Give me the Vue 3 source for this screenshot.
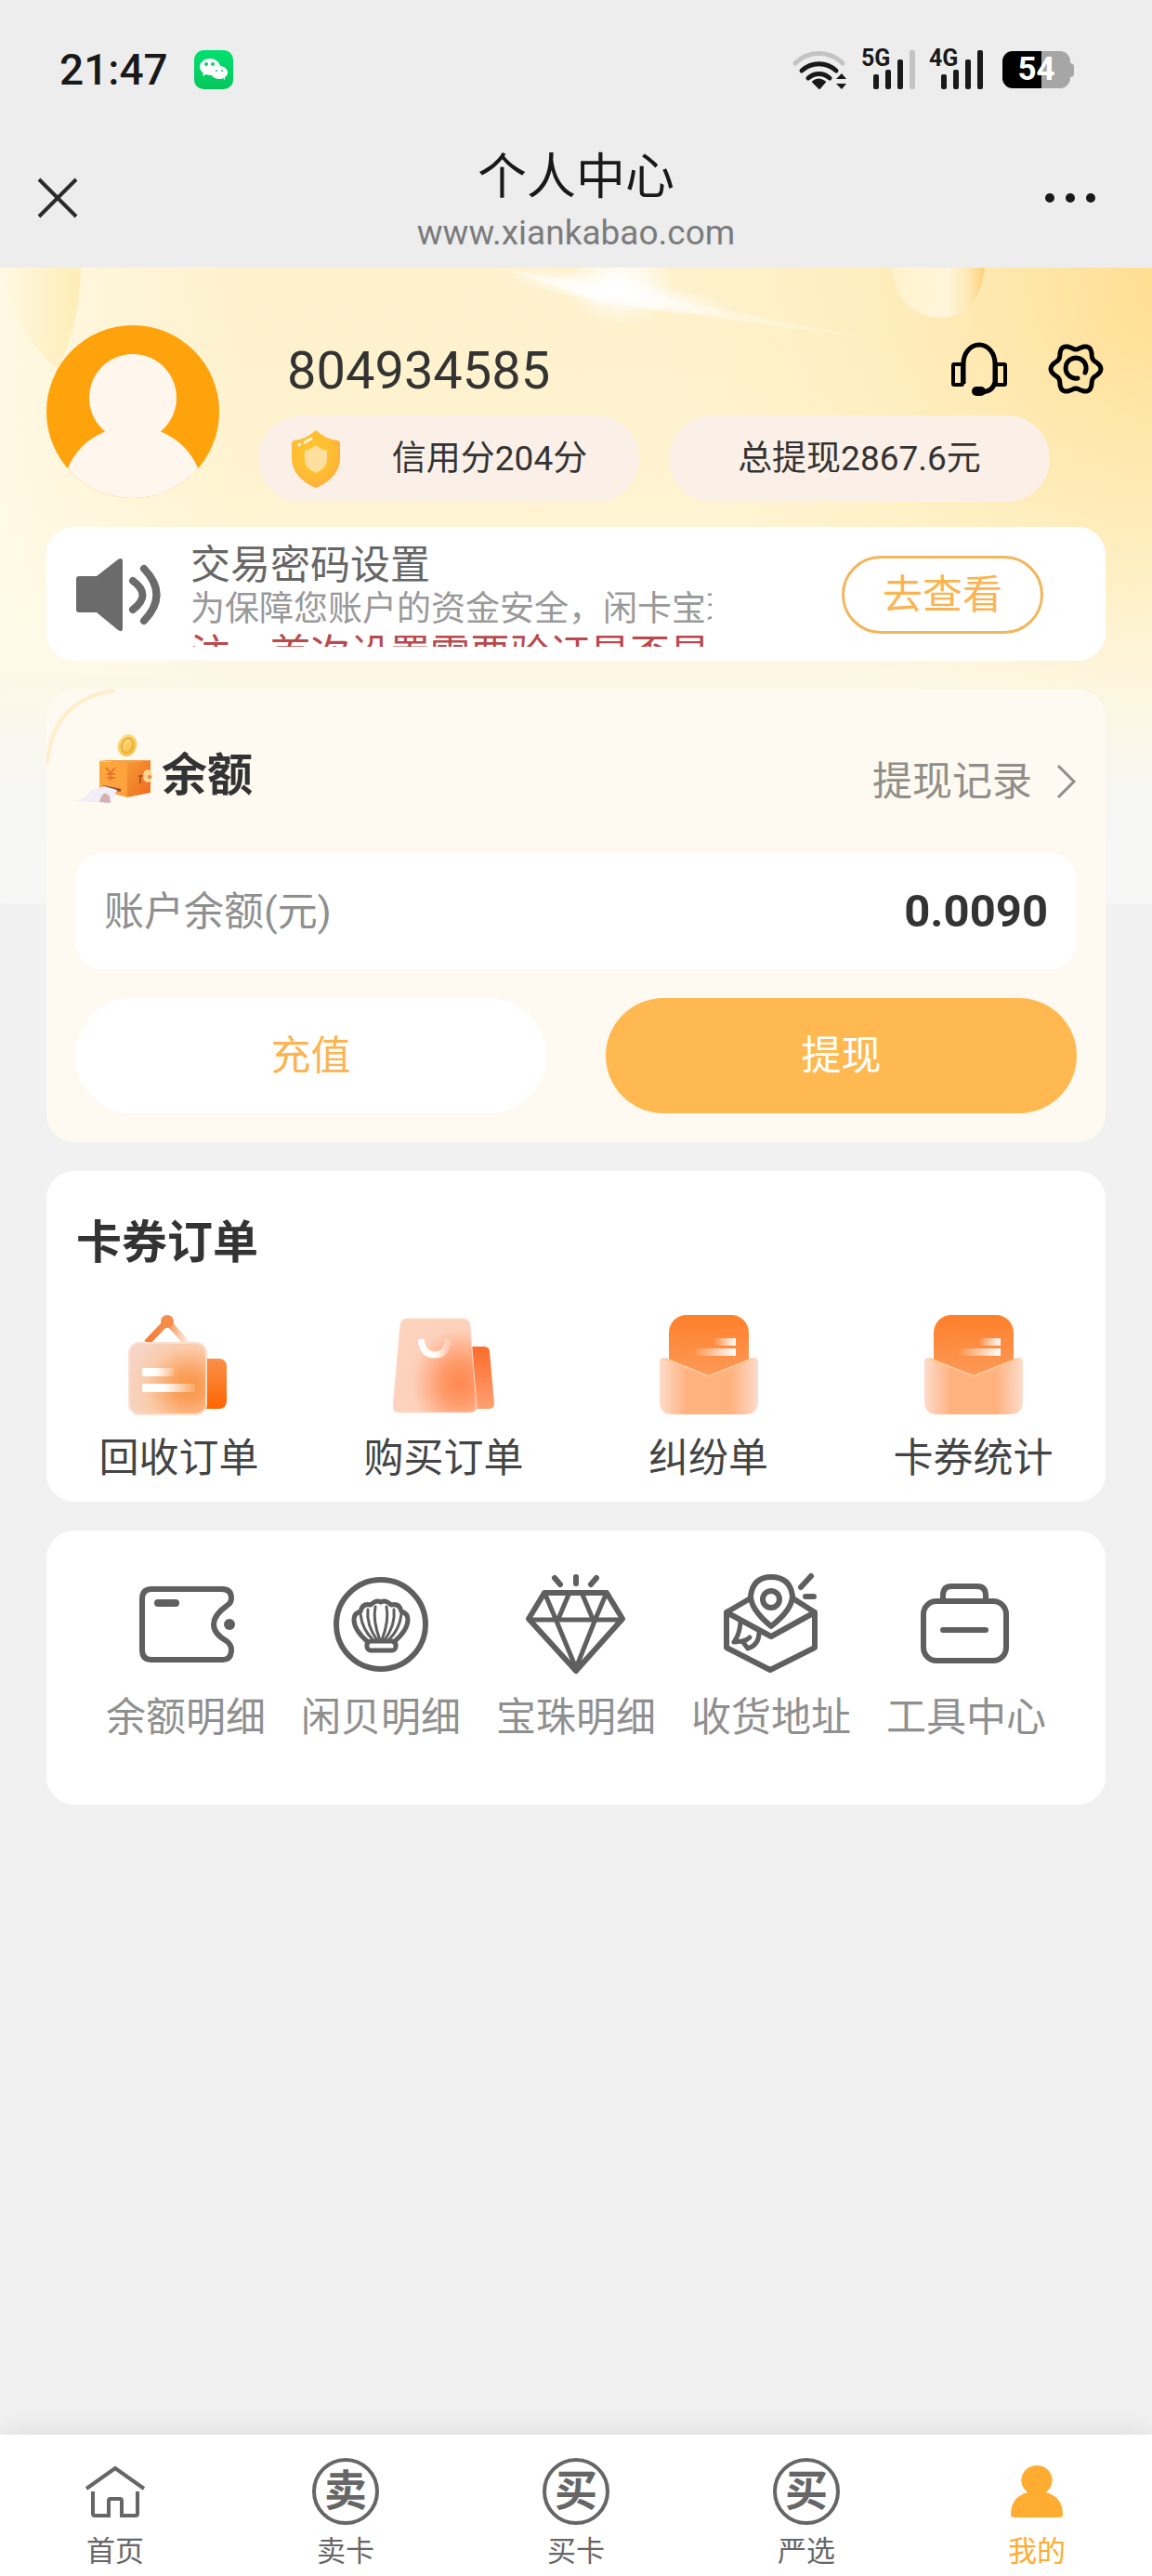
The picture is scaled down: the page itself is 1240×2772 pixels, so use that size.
<script setup>
import { ref } from 'vue'

const orders = [
  { id: 'recycle', label: '回收订单' },
  { id: 'bag', label: '购买订单' },
  { id: 'mail', label: '纠纷单' },
  { id: 'mail', label: '卡券统计' },
]

const tools = [
  { id: 'wallet', label: '余额明细' },
  { id: 'shell', label: '闲贝明细' },
  { id: 'diamond', label: '宝珠明细' },
  { id: 'address', label: '收货地址' },
  { id: 'toolbox', label: '工具中心' },
]

const tabs = [
  { label: '首页', icon: 'home' },
  { label: '卖卡', glyph: '卖' },
  { label: '买卡', glyph: '买' },
  { label: '严选', glyph: '买' },
  { label: '我的', icon: 'user' },
]
const activeTab = ref(4)

// Six-lobed outline of the settings gear
const gear = Array.from({ length: 72 }, (_, i) => {
  const a = (i * Math.PI) / 36
  const r = 24 + 3 * Math.cos(6 * a)
  return `${(30 + r * Math.cos(a)).toFixed(1)},${(30 + r * Math.sin(a)).toFixed(1)}`
}).join(' ')
</script>

<template>
  <div class="page">
    <header class="top">
      <div class="status">
        <time class="clock">21:47</time>
        <svg class="wechat" viewBox="0 0 42 42" aria-hidden="true">
          <defs>
            <linearGradient id="wx" x1="0" y1="0" x2="0" y2="1">
              <stop offset="0" stop-color="#00e070" /><stop offset="1" stop-color="#07c75c" />
            </linearGradient>
          </defs>
          <rect width="42" height="42" rx="10" fill="url(#wx)" />
          <path d="M17 9c-6 0-11 4-11 9 0 3 2 5 4 7l-1 3 4-2c2 1 5 1 7 1a9 8 0 0 1 8-10c-1-5-6-8-11-8z" fill="#fff" />
          <path d="M27 17c-5 0-9 3-9 7s4 7 9 7c1 0 3 0 4-1l2 2v-3c2-1 3-3 3-5 0-4-4-7-9-7z" fill="#fff" />
          <g fill="#0bd066"><circle cx="13" cy="15" r="2" /><circle cx="20" cy="15" r="2" /><circle cx="24" cy="22" r="1" /><circle cx="30" cy="22" r="1" /></g>
        </svg>
        <div class="signals">
          <svg width="62" height="46" viewBox="0 0 62 46" fill="none" stroke-width="5" stroke-linecap="round" aria-label="WiFi">
            <path d="M5 16a36 36 0 0 1 51 0" stroke="#c4c4c4" />
            <path d="M12 24a27 27 0 0 1 37 0M19 32a17 17 0 0 1 23 0" stroke="#191919" />
            <path d="M24 36q6-5 13 0l-6 7z" fill="#191919" stroke="#191919" stroke-width="2" stroke-linejoin="round" />
            <path d="M49 33h11l-5-6zM49 38h11l-5 6z" fill="#191919" />
          </svg>
          <div class="cell">
            <span class="net">5G</span>
            <svg viewBox="0 0 46 42" aria-hidden="true"><g fill="#191919"><rect y="26" width="6" height="16" rx="2" /><rect x="13" y="21" width="6" height="21" rx="2" /><rect x="26" y="10" width="6" height="32" rx="2" /></g><rect x="39" width="6" height="42" rx="2" fill="#c4c4c4" /></svg>
          </div>
          <div class="cell">
            <span class="net">4G</span>
            <svg viewBox="0 0 46 42" aria-hidden="true"><g fill="#191919"><rect y="26" width="6" height="16" rx="2" /><rect x="13" y="21" width="6" height="21" rx="2" /><rect x="26" y="10" width="6" height="32" rx="2" /><rect x="39" width="6" height="42" rx="2" /></g></svg>
          </div>
          <div class="battery">54</div>
        </div>
      </div>
      <div class="nav">
        <button class="close" type="button" aria-label="关闭">
          <svg width="44" height="44" viewBox="0 0 44 44"><path d="M2 2l40 40M42 2L2 42" stroke="#2b2b2b" stroke-width="4" /></svg>
        </button>
        <div class="titles">
          <h1>个人中心</h1>
          <p>www.xiankabao.com</p>
        </div>
        <button class="more" type="button" aria-label="更多">
          <svg width="56" height="12" viewBox="0 0 56 12" fill="#191919"><circle cx="6" cy="6" r="5" /><circle cx="28" cy="6" r="5" /><circle cx="50" cy="6" r="5" /></svg>
        </button>
      </div>
    </header>

    <main class="content">
      <svg class="backdrop" viewBox="0 0 1240 684" preserveAspectRatio="none" aria-hidden="true">
        <defs>
          <linearGradient id="base" x1="0" y1="0" x2="0" y2="1">
            <stop offset="0" stop-color="#fef1cc" /><stop offset=".35" stop-color="#fff3d0" />
            <stop offset=".52" stop-color="#fff6dc" /><stop offset=".68" stop-color="#fcf9ea" />
            <stop offset=".82" stop-color="#f6f6f3" /><stop offset="1" stop-color="#f7f7f7" />
          </linearGradient>
          <radialGradient id="warm" gradientUnits="userSpaceOnUse" cx="1260" cy="20" r="560">
            <stop offset="0" stop-color="#ffdb88" stop-opacity=".9" /><stop offset=".45" stop-color="#ffe29a" stop-opacity=".45" />
            <stop offset="1" stop-color="#fff0c0" stop-opacity="0" />
          </radialGradient>
          <linearGradient id="pale" x1="0" y1="0" x2="1" y2="0">
            <stop offset="0" stop-color="#fffbe9" stop-opacity=".8" /><stop offset="1" stop-color="#fffbe9" stop-opacity="0" />
          </linearGradient>
          <linearGradient id="leaf" x1="0" y1="0" x2="1" y2="0">
            <stop offset="0" stop-color="#ffeaa8" stop-opacity="0" /><stop offset="1" stop-color="#ffe9a8" stop-opacity=".7" />
          </linearGradient>
          <radialGradient id="glow"><stop offset="0" stop-color="#fff" /><stop offset=".4" stop-color="#fff" stop-opacity=".7" /><stop offset="1" stop-color="#fff" stop-opacity="0" /></radialGradient>
          <radialGradient id="streak" gradientUnits="userSpaceOnUse" cx="670" cy="24" r="290"><stop offset="0" stop-color="#fff" stop-opacity=".6" /><stop offset="1" stop-color="#fff" stop-opacity="0" /></radialGradient>
          <linearGradient id="ball" x1="0" y1="0" x2="1" y2="0">
            <stop offset="0" stop-color="#fff3cd" /><stop offset=".6" stop-color="#fff5da" /><stop offset=".82" stop-color="#ffe9b5" /><stop offset="1" stop-color="#ffcf7a" />
          </linearGradient>
        </defs>
        <rect width="1240" height="684" fill="url(#base)" />
        <rect width="1240" height="684" fill="url(#warm)" />
        <rect width="260" height="440" fill="url(#pale)" />
        <path d="M0 0H87Q86 60 62 110Q40 90 20 60Z" fill="url(#leaf)" />
        <path d="M540 0L960 80L640 36Z" fill="url(#streak)" />
        <ellipse cx="665" cy="26" rx="130" ry="16" fill="url(#glow)" transform="rotate(9 665 26)" />
        <ellipse cx="668" cy="18" rx="60" ry="44" fill="url(#glow)" />
        <path d="M960 0H1060Q1054 54 1010 54Q966 50 960 0Z" fill="url(#ball)" />
      </svg>

      <section class="profile">
        <svg class="avatar" viewBox="0 0 186 186" role="img" aria-label="头像">
          <defs><clipPath id="disc"><circle cx="93" cy="93" r="93" /></clipPath></defs>
          <g clip-path="url(#disc)">
            <rect width="186" height="186" fill="#ffa30d" />
            <circle cx="93" cy="78" r="47" fill="#fff6ee" />
            <path d="M64 114Q93 104 122 114Q152 126 164 156V186H22V156Q34 126 64 114Z" fill="#fff6ee" />
          </g>
        </svg>
        <div class="info">
          <div class="name-row">
            <h2>804934585</h2>
            <button type="button" aria-label="客服">
              <svg width="62" height="60" viewBox="0 0 62 60" fill="none" stroke="#000">
                <path d="M14 46V24a17 20 0 0 1 34 0v20q-2 10-14 11" stroke-width="5" />
                <rect x="3" y="25" width="10" height="22" rx="1" stroke-width="4" />
                <rect x="49" y="25" width="10" height="22" rx="1" stroke-width="4" />
                <rect x="23" y="49" width="15" height="10" rx="5" fill="#000" stroke="none" />
              </svg>
            </button>
            <button type="button" aria-label="设置">
              <svg width="60" height="60" viewBox="0 0 60 60" fill="none" stroke="#000" stroke-width="5" stroke-linecap="round" stroke-linejoin="round">
                <polygon :points="gear" />
                <path d="M40 34A11 11 0 1 0 32 40" />
              </svg>
            </button>
          </div>
          <div class="pills">
            <div class="pill">
              <svg width="52" height="62" viewBox="0 0 52 62" aria-hidden="true">
                <defs>
                  <radialGradient id="sh" cx=".45" cy=".4" r=".7"><stop offset="0" stop-color="#ffc829" /><stop offset=".6" stop-color="#ffbc35" /><stop offset="1" stop-color="#fca738" /></radialGradient>
                </defs>
                <path d="M26 0Q37 10 50 11Q52 12 52 15V32Q50 52 26 62Q2 52 0 32V15Q0 12 2 11Q15 10 26 0Z" fill="url(#sh)" />
                <path d="M26 16Q32 21 38 22V33Q37 41 26 46Q15 41 14 33V22Q20 21 26 16Z" fill="#ffdf9d" />
                <path d="M14 13L21 9M8 16L9 15" stroke="#fff6df" stroke-width="3" stroke-linecap="round" />
              </svg>
              <span>信用分204分</span>
            </div>
            <div class="pill"><span>总提现2867.6元</span></div>
          </div>
        </div>
      </section>

      <section class="notice">
        <svg width="94" height="82" viewBox="0 0 94 82" fill="none" stroke="#6b6b6b" stroke-width="8" stroke-linecap="round" aria-hidden="true">
          <path d="M5 21H24L47 3Q52 0 52 5V77Q52 82 47 79L24 60H5Q2 60 2 57V24Q2 21 5 21Z" fill="#6b6b6b" stroke="none" />
          <path d="M63 26Q84 41 63 57M75 13Q102 41 75 69" />
        </svg>
        <div class="notice-text">
          <p>交易密码设置</p>
          <p class="small">为保障您账户的资金安全，闲卡宝现</p>
          <p class="warn">注，首次设置需要验证是否是</p>
        </div>
        <button class="outline" type="button">去查看</button>
      </section>

      <section class="balance">
        <svg class="arc" viewBox="0 0 80 80" aria-hidden="true"><path d="M1 79Q6 12 72 1" fill="none" stroke="#ffedcb" stroke-width="4" stroke-linecap="round" /></svg>
        <div class="balance-head">
          <svg width="86" height="76" viewBox="0 0 86 76" aria-hidden="true">
            <defs>
              <linearGradient id="front" x1="0" y1="0" x2="1" y2="1"><stop offset="0" stop-color="#fca93c" /><stop offset="1" stop-color="#ff9f3f" /></linearGradient>
              <linearGradient id="side" x1="0" y1="0" x2="1" y2="1"><stop offset="0" stop-color="#f79a35" /><stop offset="1" stop-color="#ee6a20" /></linearGradient>
              <linearGradient id="coin" x1="0" y1="0" x2="1" y2="1"><stop offset="0" stop-color="#ffe48c" /><stop offset="1" stop-color="#f8b83a" /></linearGradient>
            </defs>
            <ellipse cx="56" cy="12" rx="10" ry="12" fill="url(#coin)" transform="rotate(20 56 12)" />
            <ellipse cx="56" cy="12" rx="6" ry="8" fill="none" stroke="#eaae3d" stroke-width="2" transform="rotate(20 56 12)" />
            <path d="M26 28H81L55 32Z" fill="#f5a041" />
            <path d="M26 29L56 31V68L26 60Z" fill="url(#front)" />
            <path d="M56 31L81 28V63L56 68Z" fill="url(#side)" />
            <path d="M33 36l5 6 5-6M38 42v8M34 43h9M34 47h9" fill="none" stroke="#e9772b" stroke-width="2" />
            <path d="M68 45h10M70 45v8" stroke="#b5561c" stroke-width="2" />
            <ellipse cx="78" cy="45" rx="5" ry="7" fill="#ffd493" /><circle cx="80" cy="46" r="2" fill="#d98d42" />
            <path d="M30 55L49 59V62L30 58Z" fill="#8d4a2d" />
            <path d="M18 60L31 56L45 60L38 74L1 72Q10 70 18 60Z" fill="#f1eef7" />
            <path d="M26 73Q30 58 37 67L38 74Z" fill="#d4b0b3" />
          </svg>
          <h3>余额</h3>
          <a class="records" href="#records">提现记录
            <svg width="22" height="38" viewBox="0 0 22 38"><path d="M2 2L19 19L2 36" fill="none" stroke="#8f8d88" stroke-width="3" /></svg>
          </a>
        </div>
        <div class="amount">
          <span>账户余额(元)</span>
          <strong>0.0090</strong>
        </div>
        <div class="actions">
          <button class="recharge" type="button">充值</button>
          <button class="withdraw" type="button">提现</button>
        </div>
      </section>

      <section class="card orders">
        <h3>卡券订单</h3>
        <nav class="row">
          <a v-for="(o, i) in orders" :key="o.label" href="#orders">
            <svg v-if="o.id === 'recycle'" class="icon" viewBox="0 0 110 110" aria-hidden="true">
              <defs>
                <radialGradient id="r1" cx=".78" cy=".62" r=".85"><stop offset="0" stop-color="#f99443" /><stop offset=".25" stop-color="#faa25f" /><stop offset=".65" stop-color="#fbcbaa" /><stop offset="1" stop-color="#f6d5c8" /></radialGradient>
                <linearGradient id="r2" x1="0" y1="0" x2="0" y2="1"><stop offset="0" stop-color="#f9914a" /><stop offset="1" stop-color="#ff6500" /></linearGradient>
                <linearGradient id="r3" x1="0" y1="0" x2="1" y2="0"><stop offset="0" stop-color="#f37c35" /><stop offset=".5" stop-color="#f58f50" /><stop offset="1" stop-color="#fdebdf" /></linearGradient>
                <linearGradient id="r4" x1="0" y1="0" x2="1" y2="0"><stop offset=".4" stop-color="#fff" /><stop offset="1" stop-color="#fff" stop-opacity=".15" /></linearGradient>
              </defs>
              <path d="M20 31L42 8L63 31" fill="none" stroke="url(#r3)" stroke-width="7" />
              <circle cx="42" cy="8" r="7" fill="#f58c4a" />
              <rect x="77" y="48" width="29" height="54" rx="8" fill="url(#r2)" />
              <rect x="1" y="31" width="83" height="77" rx="11" fill="url(#r1)" stroke="#fbe0d0" stroke-width="2" />
              <rect x="15" y="58" width="34" height="9" rx="1" fill="url(#r4)" /><rect x="15" y="75" width="57" height="9" rx="1" fill="url(#r4)" />
            </svg>
            <svg v-else-if="o.id === 'bag'" class="icon" viewBox="0 0 110 110" aria-hidden="true">
              <defs>
                <radialGradient id="b1" cx=".8" cy=".68" r=".75"><stop offset="0" stop-color="#ff8850" /><stop offset=".3" stop-color="#ff9b6b" /><stop offset=".75" stop-color="#fdd0ba" /><stop offset="1" stop-color="#fdd3be" /></radialGradient>
                <linearGradient id="b2" x1="0" y1="0" x2="0" y2="1"><stop offset="0" stop-color="#fb6c2c" /><stop offset="1" stop-color="#ffa071" /></linearGradient>
                <linearGradient id="b3" x1="0" y1="0" x2="1" y2="0"><stop offset=".5" stop-color="#fff" /><stop offset="1" stop-color="#fff" stop-opacity=".2" /></linearGradient>
              </defs>
              <path d="M84 35H98Q104 35 104 41L109 96Q109 102 103 102H84Z" fill="url(#b2)" />
              <path d="M15 5H75Q82 5 83 12L90 99Q90 106 83 106H7Q0 106 0 99L8 12Q9 5 15 5Z" fill="url(#b1)" stroke="#fddccc" />
              <path d="M30 27Q32 44 45 44Q58 44 60 27" fill="none" stroke="url(#b3)" stroke-width="7" />
            </svg>
            <svg v-else class="icon" viewBox="0 0 110 110" aria-hidden="true">
              <defs>
                <linearGradient :id="'m' + i" x1="0" y1="0" x2="0" y2="1"><stop offset="0" stop-color="#ff7f2a" /><stop offset="1" stop-color="#fb9e5f" /></linearGradient>
                <linearGradient :id="'e' + i" x1="0" y1="0" x2="1" y2="0"><stop offset="0" stop-color="#fddccb" /><stop offset=".28" stop-color="#ffb17e" /><stop offset=".72" stop-color="#ffb17e" /><stop offset="1" stop-color="#fddccb" /></linearGradient>
                <linearGradient :id="'l' + i" x1="0" y1="0" x2="1" y2="0"><stop offset="0" stop-color="#fff" stop-opacity="0" /><stop offset="1" stop-color="#fff" /></linearGradient>
              </defs>
              <rect x="12" y="1" width="86" height="75" rx="19" :fill="`url(#m${i})`" />
              <rect x="60" y="26" width="24" height="8" :fill="`url(#l${i})`" /><rect x="38" y="37" width="46" height="8" :fill="`url(#l${i})`" />
              <path d="M6 47L55 67L104 47Q108 47 108 52V94Q108 108 94 108H16Q2 108 2 94V52Q2 47 6 47Z" :fill="`url(#e${i})`" />
              <path d="M8 48L55 67L102 48" fill="none" stroke="#ffc796" stroke-width="2" />
            </svg>
            <span>{{ o.label }}</span>
          </a>
        </nav>
      </section>

      <section class="card tools">
        <nav class="row">
          <a v-for="t in tools" :key="t.label" href="#tools">
            <svg class="icon" viewBox="0 0 110 110" fill="none" stroke="#5f5f5f" stroke-width="6" stroke-linecap="round" stroke-linejoin="round" aria-hidden="true">
              <g v-if="t.id === 'wallet'">
                <path d="M96 18H18Q8 18 8 29V83Q8 94 18 94H95Q104 94 104 83Q104 78 99 74Q85 66 85 56Q85 46 99 36Q104 33 104 28Q104 18 94 18" />
                <rect x="21" y="29" width="27" height="8" rx="4" fill="#5f5f5f" stroke="none" /><circle cx="102" cy="56" r="6" fill="#5f5f5f" stroke="none" />
              </g>
              <g v-else-if="t.id === 'shell'">
                <circle cx="55" cy="56" r="48" />
                <g stroke-width="5">
                  <path d="M41 75Q26 62 26 51Q26 44 33 42Q35 33 44 35Q50 29 55 32Q60 29 66 35Q75 33 77 42Q84 44 84 51Q84 62 69 75" />
                  <rect x="40" y="74" width="31" height="10" rx="4" />
                </g>
                <path d="M54 73Q46 52 49 37M56 73Q64 52 61 37M51 73Q39 56 41 40M59 73Q71 56 69 40M47 73Q35 62 33 45M63 73Q75 62 77 45" stroke-width="3" />
              </g>
              <g v-else-if="t.id === 'diamond'">
                <path d="M21 22H88L105 50L55 106L4 50Z" /><path d="M6 51H103M22 24L33 50L55 103L76 50L87 24M47 24L36 50M62 24L73 50" stroke-width="5" />
                <path d="M32 6L38 13M77 6L71 13M55 5V12" />
              </g>
              <g v-else-if="t.id === 'address'">
                <path d="M31 29L7 43V81L54 105L102 81V43L80 29M7 43L55 69L102 43" />
                <path d="M55 58Q33 40 33 25Q36 5 55 5Q75 5 78 25Q78 40 55 58Z" /><circle cx="55" cy="29" r="9" />
                <path d="M22 54Q21 67 15 75L24 74L30 82Q42 78 42 65M24 74Q29 73 32 70" stroke-width="5" />
                <path d="M98 4L87 16M92 26H101" />
              </g>
              <g v-else>
                <rect x="9" y="31" width="89" height="64" rx="14" /><path d="M30 30V25Q30 15 39 15H67Q76 15 76 25V30M30 62H76" />
              </g>
            </svg>
            <span>{{ t.label }}</span>
          </a>
        </nav>
      </section>
    </main>

    <nav class="tabbar">
      <button v-for="(t, i) in tabs" :key="t.label" type="button" :class="{ active: i === activeTab }" @click="activeTab = i">
        <span v-if="t.glyph" class="ring">{{ t.glyph }}</span>
        <svg v-else width="72" height="72" viewBox="0 0 72 72" aria-hidden="true">
          <path v-if="t.icon === 'home'" d="M5 33L36 11L67 33M12 36V60Q12 62 14 62H29V46Q29 44 31 44H41Q43 44 43 46V62H58Q60 62 60 60V36" fill="none" stroke="currentColor" stroke-width="4" />
          <path v-else d="M36 8A16 16 0 0 1 46 37Q64 42 64 61Q64 64 60 64H12Q8 64 8 61Q8 42 26 37A16 16 0 0 1 36 8Z" fill="currentColor" />
        </svg>
        <span>{{ t.label }}</span>
      </button>
    </nav>
  </div>
</template>

<style>
body {
  background: #f1f1f1;
}
</style>

<style scoped>
.page {
  display: flex;
  flex-direction: column;
  min-height: 100vh;
  background: #f1f1f1;
  color: #333;
  font-family: Roboto, "Noto Sans CJK SC", sans-serif;
  font-size: 43px;
  line-height: 50px;
}
h1, h2, h3, p {
  margin: 0;
}
button {
  padding: 0;
  border: 0;
  background: none;
  color: inherit;
  font: inherit;
  cursor: pointer;
}
a {
  color: inherit;
  text-decoration: none;
}
svg {
  display: block;
  flex: none;
}

.top {
  background: #ededed;
  color: #191919;
}
.status {
  display: flex;
  align-items: center;
  height: 42px;
  padding: 54px 88px 42px 64px;
}
.clock {
  font-size: 46px;
  font-weight: 500;
}
.wechat {
  width: 42px;
  margin-left: 28px;
}
.signals {
  display: flex;
  align-items: center;
  gap: 16px;
  margin-left: auto;
}
.cell {
  position: relative;
  padding-left: 11px;
}
.cell svg {
  width: 46px;
}
.net {
  position: absolute;
  top: -3px;
  left: -2px;
  font-size: 25px;
  font-weight: 700;
  line-height: 24px;
}
.battery {
  position: relative;
  width: 73px;
  margin-left: 4px;
  border-radius: 11px;
  background: linear-gradient(90deg, #000 58%, #a6a6a6 58%);
  color: #fff;
  font-size: 35px;
  font-weight: 700;
  line-height: 40px;
  text-align: center;
}
.battery::after {
  content: "";
  position: absolute;
  top: 13px;
  right: -4px;
  width: 4px;
  height: 15px;
  border-radius: 0 4px 4px 0;
  background: #a6a6a6;
}
.nav {
  display: flex;
  align-items: center;
  justify-content: space-between;
  height: 150px;
  padding: 0 60px 0 40px;
}
.close {
  display: flex;
  width: 92px;
}
.more {
  display: flex;
  justify-content: flex-end;
  width: 72px;
}
.titles {
  display: flex;
  flex-direction: column;
  gap: 6px;
  padding-top: 6px;
  text-align: center;
}
.titles h1 {
  font-size: 53px;
  font-weight: 400;
  line-height: 64px;
}
.titles p {
  color: #7b7b7b;
  font-size: 37px;
  line-height: 44px;
}

.content {
  position: relative;
  padding: 62px 50px 30px;
}
.backdrop {
  position: absolute;
  top: 0;
  left: 0;
  width: 100%;
  height: 684px;
}
.content > section {
  position: relative;
}
.profile {
  display: flex;
  align-items: flex-start;
  gap: 42px;
  margin-bottom: 27px;
}
.avatar {
  width: 186px;
}
.info {
  flex: 1;
}
.name-row {
  display: flex;
  align-items: center;
  gap: 43px;
  height: 93px;
  padding: 0 2px 4px 31px;
}
.name-row h2 {
  flex: 1;
  padding-top: 4px;
  font-size: 56px;
  font-weight: 400;
}
.pills {
  display: flex;
  gap: 32px;
  padding-right: 60px;
  font-size: 37px;
}
.pill {
  display: flex;
  flex: 1;
  align-items: center;
  height: 93px;
  border-radius: 47px;
  background: #fbf0e7;
}
.pill svg {
  margin-left: 36px;
}
.pill span {
  flex: 1;
  text-align: center;
}

.notice {
  display: flex;
  align-items: center;
  margin-bottom: 31px;
  padding: 16px 67px 15px 30px;
  border-radius: 30px;
  background: #fff;
  color: #666;
}
.notice-text {
  width: 561px;
  height: 113px;
  margin: 0 auto 0 31px;
  overflow: hidden;
  white-space: nowrap;
}
.notice-text .small {
  color: #999;
  font-size: 37px;
  line-height: 46px;
}
.notice-text .warn {
  color: #b9494b;
}
.outline {
  width: 217px;
  height: 84px;
  border: 3px solid #f2b65c;
  border-radius: 42px;
  color: #fbb450;
}

.balance {
  margin-bottom: 31px;
  padding: 48px 31px 31px;
  border-radius: 30px;
  background: #fefaf2;
}
.arc {
  position: absolute;
  top: 0;
  left: 0;
  width: 80px;
}
.balance-head {
  display: flex;
  align-items: flex-end;
  margin-bottom: 52px;
}
h3 {
  font-size: 49px;
  font-weight: 700;
  line-height: 56px;
}
.balance-head h3 {
  margin-left: 7px;
  line-height: 62px;
}
.records {
  display: flex;
  align-items: center;
  gap: 26px;
  margin-left: auto;
  color: #918e89;
}
.amount {
  display: flex;
  align-items: center;
  justify-content: space-between;
  height: 125px;
  margin-bottom: 31px;
  padding: 0 31px;
  border-radius: 30px;
  background: #fff;
  color: #8f8f8f;
}
.amount strong {
  color: #333;
  font-size: 49px;
}
.actions {
  display: flex;
  gap: 64px;
}
.actions button {
  flex: 1;
  height: 124px;
  border-radius: 62px;
}
.recharge {
  background: #fff;
  color: #fbb450;
}
.withdraw {
  background: #ffb950;
  color: #fff;
}

.card {
  border-radius: 30px;
  background: #fff;
}
.row {
  display: flex;
}
.row a {
  display: flex;
  flex: 1;
  flex-direction: column;
  align-items: center;
}
.icon {
  width: 110px;
  height: 110px;
}
.orders {
  margin-bottom: 31px;
  padding: 50px 0 22px;
}
.orders h3 {
  margin: 0 32px 48px;
}
.orders a {
  gap: 20px;
  color: #444;
}
.tools {
  padding: 45px 45px 69px;
}
.tools a {
  gap: 21px;
  color: #8f8f8f;
}

.tabbar {
  position: sticky;
  bottom: 0;
  display: flex;
  margin-top: auto;
  padding: 25px 0 8px;
  background: #fff;
  box-shadow: 0 0 30px rgba(0, 0, 0, 0.1);
  color: #666;
  font-size: 31px;
  line-height: 36px;
}
.tabbar button {
  display: flex;
  flex: 1;
  flex-direction: column;
  align-items: center;
  gap: 11px;
}
.tabbar .active {
  color: #ffac33;
}
.ring {
  box-sizing: border-box;
  width: 72px;
  height: 72px;
  border: 4px solid #666;
  border-radius: 50%;
  font-size: 46px;
  font-weight: 700;
  line-height: 62px;
}
</style>
